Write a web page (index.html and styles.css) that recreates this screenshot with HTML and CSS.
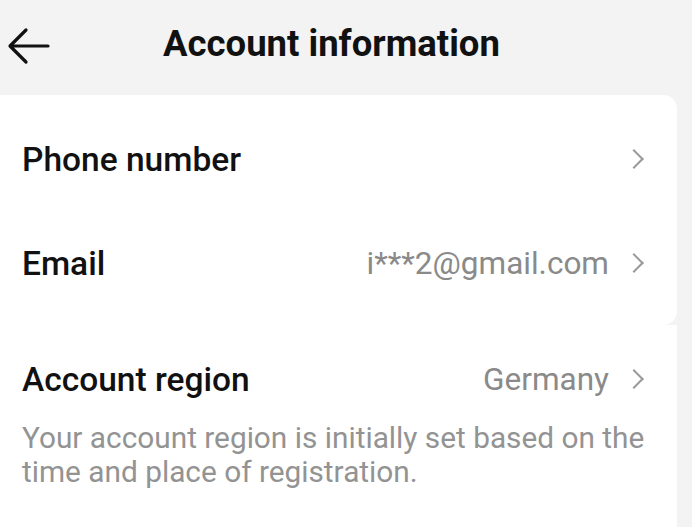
FILE: index.html
```html
<!DOCTYPE html>
<html lang="en">

<head>
    <meta charset="UTF-8">
    <meta name="viewport" content="width=device-width, initial-scale=1.0">
    <title>Account information</title>
    <link rel="stylesheet" href="styles.css">
</head>

<body>
    <header class="topbar">
        <button class="back" aria-label="Back">
            <svg width="44" height="40" viewBox="0 0 44 40">
                <path d="M41 19H4M19 3L3 19l16 16" fill="none" stroke="#111" stroke-width="3.2" stroke-linecap="round" stroke-linejoin="round"/>
            </svg>
        </button>
        <h1 class="title">Account information</h1>
    </header>

    <section class="card card-top">
        <div class="row">
            <span class="label">Phone number</span>
            <span class="value"></span>
            <span class="chev"></span>
        </div>
        <div class="row">
            <span class="label">Email</span>
            <span class="value">i***2@gmail.com</span>
            <span class="chev"></span>
        </div>
    </section>

    <section class="card card-bottom">
        <div class="row row-region">
            <span class="label">Account region</span>
            <span class="value">Germany</span>
            <span class="chev"></span>
        </div>
        <p class="note">Your account region is initially set based on the time and place of registration.</p>
    </section>
</body>

</html>
```

FILE: styles.css
```css
body {
    margin: 0;
    background: #f3f3f3;
    font-family: Roboto, "Liberation Sans", sans-serif;
    color: #111;
    width: 692px;
    height: 527px;
    overflow: hidden;
}

.topbar {
    display: flex;
    align-items: center;
    height: 95px;
    padding-bottom: 8px;
    box-sizing: border-box;
}

.back {
    border: 0;
    background: none;
    padding: 0;
    margin: 6px 0 0 7px;
    width: 44px;
    height: 40px;
    display: flex;
}

.title {
    margin: 0 0 0 112px;
    font-size: 36.5px;
    font-weight: 700;
}

.card {
    background: #fff;
    width: 677px;
}

.card-top {
    border-radius: 0 14px 14px 0;
    padding: 12px 0 10px;
}

.card-bottom {
    padding: 11px 0 60px;
}

.row {
    display: flex;
    align-items: center;
    height: 104px;
    padding: 0 36px 0 22px;
}

.row-region {
    height: 86px;
}

.label {
    font-size: 33.5px;
    font-weight: 500;
}

.value {
    margin-left: auto;
    font-size: 31.5px;
    color: #8a8a8a;
}

.chev {
    width: 12px;
    height: 12px;
    margin-left: 18px;
    border-right: 2.4px solid #9a9a9a;
    border-top: 2.4px solid #9a9a9a;
    transform: rotate(45deg);
}

.note {
    margin: -1px 0 0;
    padding: 0 20px 0 22px;
    font-size: 29.8px;
    line-height: 34px;
    color: #939393;
}
```
